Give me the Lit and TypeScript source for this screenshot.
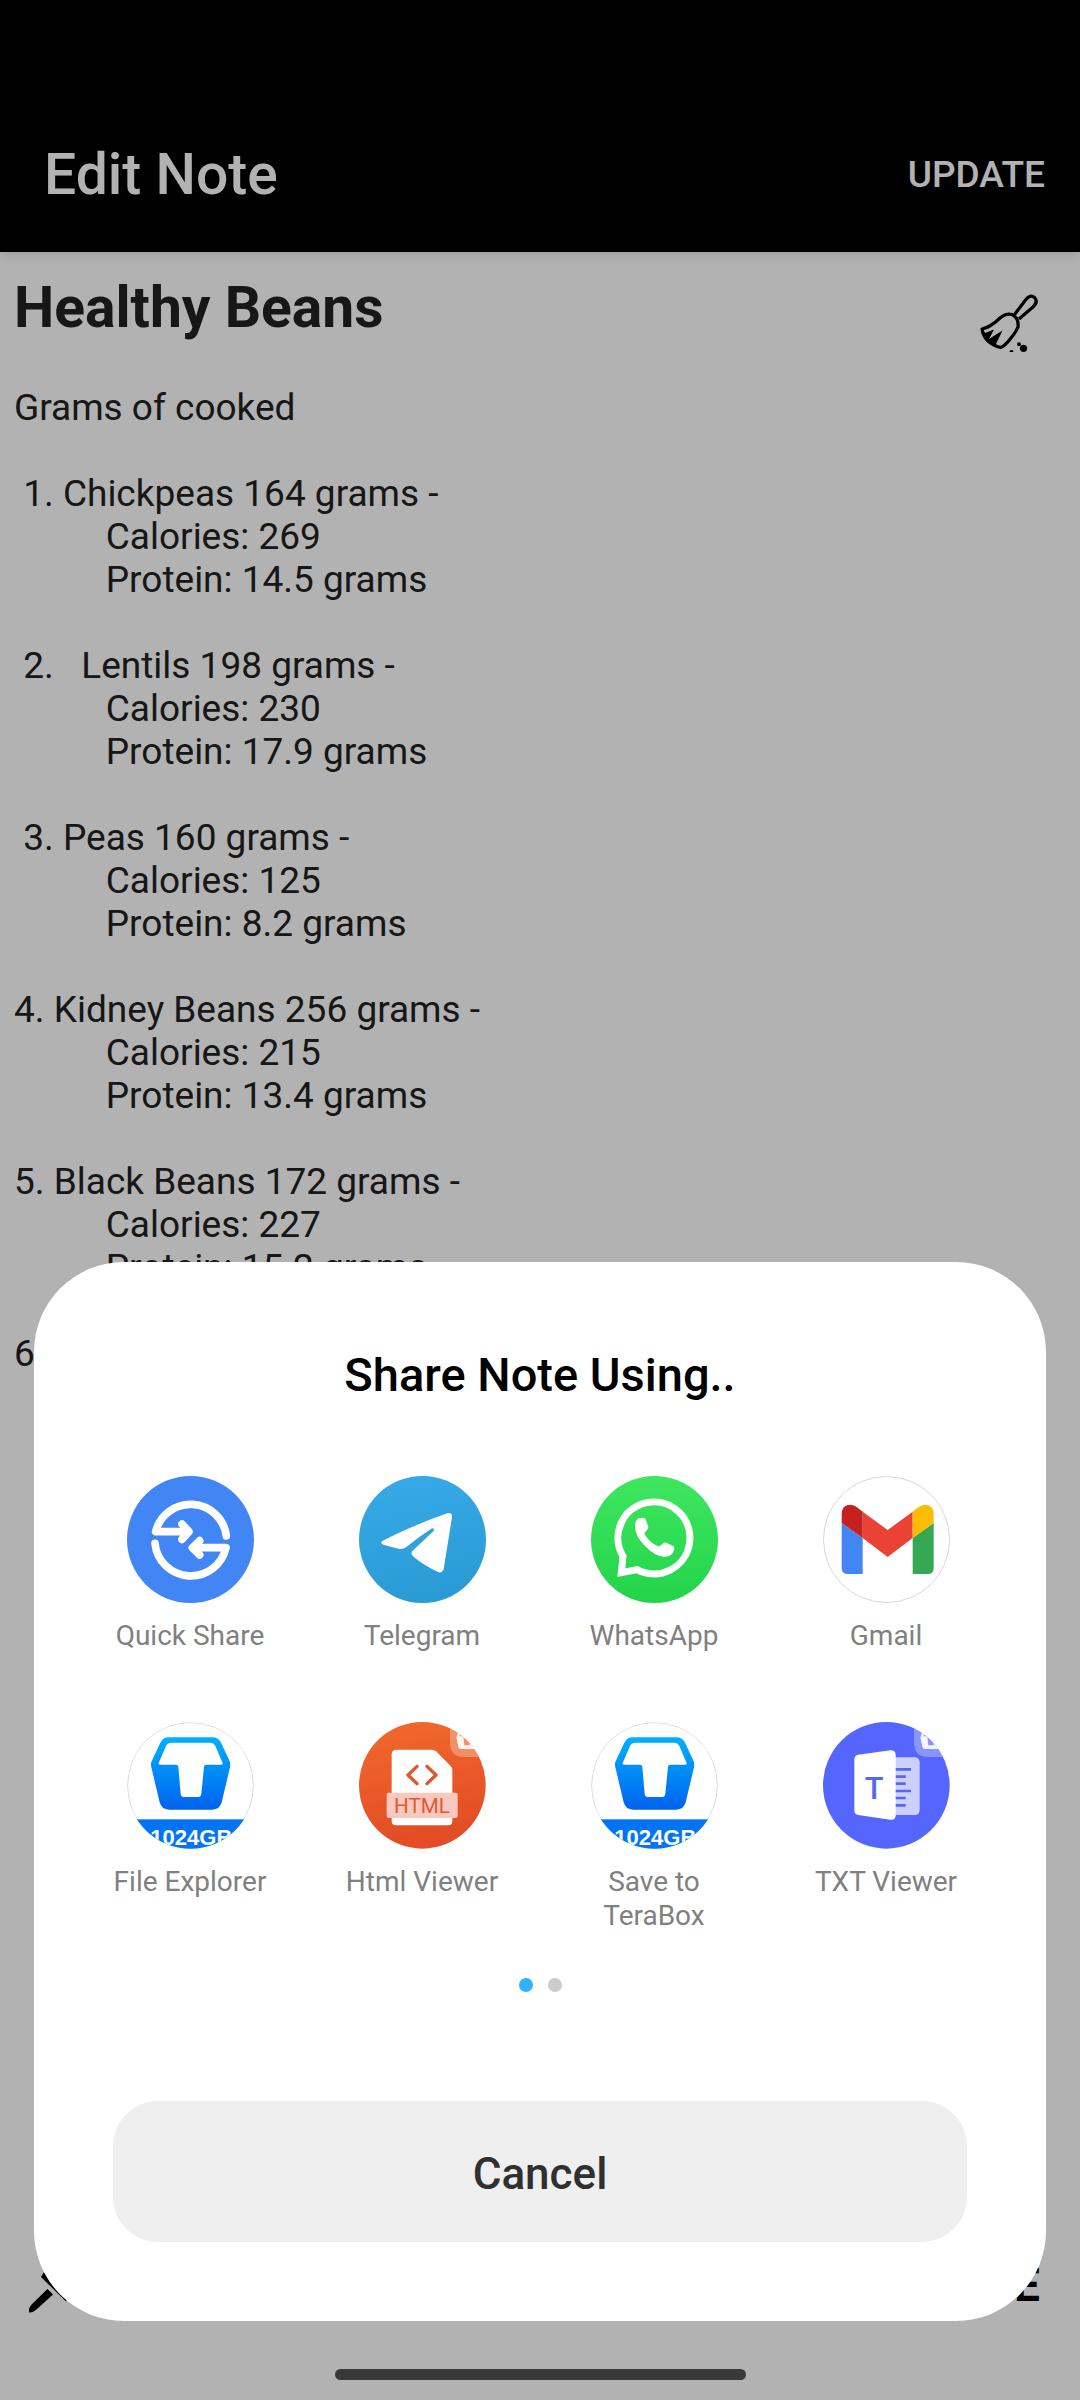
import { LitElement, html, svg, css, nothing } from "lit";
import type { TemplateResult, SVGTemplateResult } from "lit";
import { customElement, property } from "lit/decorators.js";

const NOTE_BODY = [
  "Grams of cooked",
  "",
  " 1. Chickpeas 164 grams -",
  "          Calories: 269",
  "          Protein: 14.5 grams",
  "",
  " 2.   Lentils 198 grams -",
  "          Calories: 230",
  "          Protein: 17.9 grams",
  "",
  " 3. Peas 160 grams -",
  "          Calories: 125",
  "          Protein: 8.2 grams",
  "",
  "4. Kidney Beans 256 grams -",
  "          Calories: 215",
  "          Protein: 13.4 grams",
  "",
  "5. Black Beans 172 grams -",
  "          Calories: 227",
  "          Protein: 15.2 grams",
  "",
  "6.",
].join("\n");

const BOX_OUTER =
  "M125 46H256Q274 46 281 60L308 118Q311 126 309 136L284 241Q278 263 256 263H126Q104 263 98 241L73 136Q70 126 74 118L101 60Q108 46 125 46Z";
const BOX_INNER =
  "M130 62H251Q260 62 264 70L287 123Q288 128 283 128H238Q232 128 231 135L223 216Q222 225 213 225H170Q162 225 161 216L154 135Q153 128 147 128H99Q94 128 95 123L118 70Q122 62 130 62Z";

const miniBadge = () => svg`
  <path d="M273 -10V62Q273 105 316 105H400V-10Z" fill="#fff" fill-opacity=".3"/>
  <path fill-rule="evenodd" fill="#fff" fill-opacity=".9" d="M306 8H350L364 46L356 74Q355 81 348 81H306Q299 81 298 74L292 46ZM309 28L302 43H313L316 70H332L335 43H349L342 28Z"/>
`;

const teraBox = (id: string) => svg`
  <defs>
    <linearGradient id=${"g-" + id} x1="0" y1="0" x2="0" y2="1">
      <stop offset="0" stop-color="#00b0ff"/><stop offset="1" stop-color="#0062ee"/>
    </linearGradient>
    <clipPath id=${"c-" + id}><circle cx="190.5" cy="190.5" r="190"/></clipPath>
  </defs>
  <g clip-path=${`url(#c-${id})`}>
    <rect width="381" height="381" fill="#fff"/>
    <circle cx="190.5" cy="190.5" r="189" fill="none" stroke="#d8d8d8" stroke-width="3"/>
    <path d=${BOX_OUTER} fill=${`url(#g-${id})`}/>
    <path d=${BOX_INNER} fill="#fff"/>
    <rect y="292" width="381" height="89" fill="#0074f5"/>
    <text x="193" y="368" text-anchor="middle" font-family="Liberation Sans, sans-serif" font-weight="700" font-size="66" fill="#fff">1024GB</text>
  </g>
`;

const ICONS: Record<string, () => SVGTemplateResult> = {
  quickshare: () => svg`
    <circle cx="190.5" cy="190.5" r="190.5" fill="#4285f4"/>
    <g fill="none" stroke="#fff" stroke-width="23" stroke-linecap="round" stroke-linejoin="round">
      <path d="M298 180A108 108 0 0 0 86 167H182M165 144L186 167L165 190"/>
      <path d="M84 202A108 108 0 0 0 297 215H200M218 194L196 215L218 237"/>
    </g>`,
  telegram: () => svg`
    <defs><linearGradient id="tg" x1="0" y1="0" x2="0.2" y2="1">
      <stop offset="0" stop-color="#37aae8"/><stop offset="1" stop-color="#2a9bd5"/>
    </linearGradient></defs>
    <circle cx="190.5" cy="190.5" r="190.5" fill="url(#tg)"/>
    <path fill="#fff" d="M70 195Q150 153 264 112Q280 107 279 124L254 279Q251 291 239 289Q196 270 162 241Q154 233 160 225L223 166Q229 157 219 157Q178 184 142 213Q131 221 118 218L73 206Q62 201 70 195Z"/>`,
  whatsapp: () => svg`
    <defs><linearGradient id="wa" x1="0" y1="0" x2="0" y2="1">
      <stop offset="0" stop-color="#3fe660"/><stop offset="1" stop-color="#22d44a"/>
    </linearGradient></defs>
    <circle cx="190.5" cy="190.5" r="190.5" fill="url(#wa)"/>
    <path fill="none" stroke="#fff" stroke-width="21" d="M96 241A108 108 0 1 1 138 281L91 290Z"/>
    <path fill="#fff" d="M142 127Q152 123 162 127Q168 139 172 153Q172 159 162 169Q159 173 162 177Q178 201 201 211Q205 212 208 209L218 200Q222 198 228 201L248 211Q251 214 249 222Q244 241 222 243Q190 241 159 207Q132 178 132 152Q132 135 142 127Z"/>`,
  gmail: () => svg`
    <circle cx="190.5" cy="190.5" r="189" fill="#fff" stroke="#d8d8d8" stroke-width="3"/>
    <path fill="#4285f4" d="M56 141L119 186V294H75Q56 294 56 275Z"/>
    <path fill="#34a853" d="M332 141L269 186V294H313Q332 294 332 275Z"/>
    <path fill="#ea4335" d="M119 107L194 162L269 107V186L194 243L119 186Z"/>
    <path fill="#c5221f" d="M56 141V114Q56 86 84 86Q95 87 104 95L119 107V186Z"/>
    <path fill="#fbbc04" d="M332 141V114Q332 86 304 86Q293 87 284 95L269 107V186Z"/>`,
  explorer: () => teraBox("explorer"),
  html: () => svg`
    <defs>
      <linearGradient id="hv" x1="0" y1="0" x2="0.2" y2="1">
        <stop offset="0" stop-color="#f26a2b"/><stop offset="1" stop-color="#e34c26"/>
      </linearGradient>
      <clipPath id="hvc"><circle cx="190" cy="190" r="190"/></clipPath>
    </defs>
    <g clip-path="url(#hvc)">
      <rect width="381" height="381" fill="url(#hv)"/>
      ${miniBadge()}
      <path fill="#fff" d="M112 83H218Q226 83 231 88L275 132Q280 137 280 145V297Q280 310 267 310H112Q98 310 98 297V97Q98 83 112 83Z"/>
      <path fill="none" stroke="#e0552c" stroke-width="10" stroke-linecap="round" stroke-linejoin="round" d="M174 133L147 159L174 185M204 133L231 159L204 185"/>
      <rect x="83" y="212" width="213" height="76" rx="6" fill="#f9c8be"/>
      <text x="189" y="273" text-anchor="middle" font-family="Roboto, sans-serif" font-size="62" fill="#e4582f">HTML</text>
    </g>`,
  save: () => teraBox("save"),
  txt: () => svg`
    <defs><clipPath id="txc"><circle cx="190" cy="190" r="190"/></clipPath></defs>
    <g clip-path="url(#txc)">
      <rect width="381" height="381" fill="#5566ff"/>
      ${miniBadge()}
      <rect x="190" y="106" width="100" height="173" rx="14" fill="#ccd0ff"/>
      <path stroke="#5566f0" stroke-width="8" d="M210 142H264M210 164H248M210 185H248M210 207H264M210 228H248M210 250H248"/>
      <path fill="#fff" d="M106 98L202 85Q218 84 218 99V280Q218 295 202 293L106 279Q94 277 94 265V112Q94 100 106 98Z"/>
      <text x="153" y="231" text-anchor="middle" font-family="Roboto, sans-serif" font-weight="500" font-size="92" fill="#5566f0">T</text>
    </g>`,
};

interface Target {
  icon: string;
  label: string;
}

const TARGETS: Target[] = [
  { icon: "quickshare", label: "Quick Share" },
  { icon: "telegram", label: "Telegram" },
  { icon: "whatsapp", label: "WhatsApp" },
  { icon: "gmail", label: "Gmail" },
  { icon: "explorer", label: "File Explorer" },
  { icon: "html", label: "Html Viewer" },
  { icon: "save", label: "Save to TeraBox" },
  { icon: "txt", label: "TXT Viewer" },
];

@customElement("share-target")
export class ShareTarget extends LitElement {
  @property() icon = "";
  @property() label = "";

  static styles = css`
    :host {
      display: block;
    }
    .target {
      display: flex;
      flex-direction: column;
      align-items: center;
      gap: 16px;
      width: 100%;
      margin: 0;
      padding: 0;
      border: 0;
      background: none;
      font: 400 28px/34px Roboto, sans-serif;
      color: #808080;
      cursor: pointer;
    }
    .icon {
      display: block;
      width: 127px;
      height: 127px;
    }
    .label {
      max-width: 160px;
    }
  `;

  render(): TemplateResult {
    const draw = ICONS[this.icon];
    return html`<button class="target" type="button">
      <svg class="icon" viewBox="0 0 381 381" aria-hidden="true">${draw ? draw() : nothing}</svg>
      <span class="label">${this.label}</span>
    </button>`;
  }
}

@customElement("share-sheet")
export class ShareSheet extends LitElement {
  static styles = css`
    :host {
      display: block;
    }
    .sheet {
      display: flex;
      flex-direction: column;
      padding: 85px 0 79px;
      border-radius: 90px;
      background: #fff;
    }
    .heading {
      margin: 0 0 73px;
      font: 500 47px/56px Roboto, sans-serif;
      text-align: center;
      color: #000;
    }
    .targets {
      display: grid;
      grid-template-columns: repeat(4, 1fr);
      row-gap: 69px;
      padding: 0 44px 0 40px;
    }
    .pager {
      display: flex;
      justify-content: center;
      gap: 15px;
      margin: 45px 0 109px;
    }
    .dot {
      width: 14px;
      height: 14px;
      border-radius: 50%;
      background: #ccc;
    }
    .dot.current {
      background: #33b1ff;
    }
    .cancel {
      height: 141px;
      margin: 0 79px;
      padding: 4px 0 0;
      border: 0;
      border-radius: 45px;
      background: #efefef;
      font: 500 44px/52px Roboto, sans-serif;
      color: #303030;
      cursor: pointer;
    }
  `;

  render(): TemplateResult {
    return html`<section class="sheet" role="dialog" aria-labelledby="heading">
      <h2 class="heading" id="heading">Share Note Using..</h2>
      <div class="targets">
        ${TARGETS.map((t) => html`<share-target .icon=${t.icon} .label=${t.label}></share-target>`)}
      </div>
      <div class="pager">
        <span class="dot current"></span>
        <span class="dot"></span>
      </div>
      <button class="cancel" type="button">Cancel</button>
    </section>`;
  }
}

@customElement("app-root")
export class AppRoot extends LitElement {
  static styles = css`
    :host {
      display: block;
      position: relative;
      font-family: Roboto, sans-serif;
    }
    .page {
      display: flex;
      flex-direction: column;
      min-height: 100vh;
      background: #fff;
    }
    .bar {
      display: flex;
      align-items: center;
      justify-content: space-between;
      box-sizing: border-box;
      height: 252px;
      padding: 97px 35px 0 44px;
      background: #000;
      color: #fff;
      box-shadow: 0 2px 12px rgba(0, 0, 0, 0.14);
    }
    .title {
      margin: 0;
      font: 500 57px/67px Roboto, sans-serif;
    }
    .action {
      margin: 0;
      padding: 0;
      border: 0;
      background: none;
      color: inherit;
      font: 500 37px/43px Roboto, sans-serif;
      cursor: pointer;
    }
    .editor {
      display: flex;
      flex: 1;
      flex-direction: column;
      gap: 34px;
      padding: 22px 14px 0;
    }
    .head {
      display: flex;
      align-items: flex-end;
      justify-content: space-between;
      padding-right: 28px;
    }
    .name,
    .body {
      box-sizing: border-box;
      min-width: 0;
      margin: 0;
      padding: 0;
      border: 0;
      outline: 0;
      background: none;
      color: #222;
    }
    .name {
      flex: 1;
      align-self: flex-start;
      height: 67px;
      font: 700 57px/67px Roboto, sans-serif;
    }
    .body {
      display: block;
      flex: 1;
      width: 100%;
      resize: none;
      overflow: hidden;
      white-space: pre-wrap;
      font: 400 37px/43px Roboto, sans-serif;
    }
    .tool {
      display: block;
      margin: 0;
      padding: 0;
      border: 0;
      background: none;
      color: #000;
      cursor: pointer;
    }
    .glyph {
      display: block;
      width: 58px;
      height: 58px;
    }
    .head .tool {
      padding-top: 20px;
    }
    .foot {
      display: flex;
      align-items: center;
      justify-content: space-between;
      padding: 0 40px 86px 29px;
    }
    .share {
      font: 700 46px/54px Roboto, sans-serif;
      color: #000;
    }
    .overlay {
      position: absolute;
      inset: 0;
      display: flex;
      flex-direction: column;
      justify-content: flex-end;
      gap: 48px;
      padding: 0 34px 20px;
      background: rgba(0, 0, 0, 0.3);
    }
    .home {
      align-self: center;
      width: 411px;
      height: 11px;
      border-radius: 6px;
      background: #393939;
    }
  `;

  render(): TemplateResult {
    return html`
      <main class="page">
        <header class="bar">
          <h1 class="title">Edit Note</h1>
          <button class="action" type="button">UPDATE</button>
        </header>
        <div class="editor">
          <div class="head">
            <input class="name" type="text" aria-label="Note title" .value=${"Healthy Beans"} />
            <button class="tool" type="button" aria-label="Clear note">
              <svg class="glyph" viewBox="0 0 58 58" aria-hidden="true">
                <g fill="none" stroke="currentColor" stroke-width="3.2" stroke-linejoin="round">
                  <path d="M34.5 20.5L45.5 6Q50 0 54.500 3.500Q58.500 8 53 13L39 25" />
                  <path d="M2 35Q11 33 20 24Q26 19 32 20.5Q39 24 38 33Q36 38 31 44Q25 52 20.5 53.500Q4 49 2 35Z" />
                </g>
                <path fill="currentColor" d="M1.5 34L5 39L14 35.5L9 45L22.5 36.5L15 52Q4 46 1.5 34Z" />
                <circle cx="43.5" cy="54.3" r="3.6" />
                <circle cx="39" cy="50.3" r="2" />
                <circle cx="31.5" cy="58" r="2" />
              </svg>
            </button>
          </div>
          <textarea class="body" aria-label="Note text" spellcheck="false" .value=${NOTE_BODY}></textarea>
        </div>
        <footer class="foot">
          <button class="tool" type="button" aria-label="Text colour">
            <svg class="glyph" viewBox="0 0 58 58" aria-hidden="true">
              <path d="M18.5 33L24 38.5L8 53Q4 57 0 56.5Q-1 52.5 3 48Z" />
              <path d="M12 21L15 16L40 41L37 45.5Z" />
              <path d="M23 25L43 5Q50 0 55 5Q59 10 54 16L34 36Z" />
            </svg>
          </button>
          <button class="action share" type="button">SHARE</button>
        </footer>
      </main>
      <div class="overlay">
        <share-sheet></share-sheet>
        <div class="home"></div>
      </div>
    `;
  }
}
